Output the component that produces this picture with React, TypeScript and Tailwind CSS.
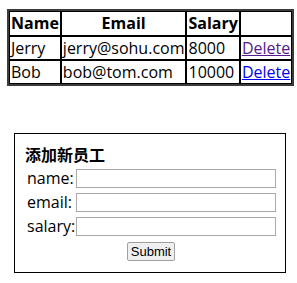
import { useState } from "react";

type Employee = { name: string; email: string; salary: string; visited?: boolean };

const initial: Employee[] = [
  { name: "Jerry", email: "jerry@sohu.com", salary: "8000", visited: true },
  { name: "Bob", email: "bob@tom.com", salary: "10000" },
];

const cell = "border border-black px-px py-0 text-left font-normal";

export default function App() {
  const [rows] = useState(initial);

  return (
    <div className="min-h-[283px] bg-white pt-[9px] pl-[7px] text-[16px] leading-[22px] text-black [font-family:'Open_Sans','Noto_Sans_CJK_SC',sans-serif]">
      <table className="border-separate border-spacing-0 border-2 border-[#3c3c3c]">
        <thead>
          <tr>
            <th className={`${cell} !font-bold leading-[23px]`}>Name</th>
            <th className={`${cell} !font-bold !text-center leading-[23px]`}>Email</th>
            <th className={`${cell} !font-bold leading-[23px]`}>Salary</th>
            <th className={cell}></th>
          </tr>
        </thead>
        <tbody>
          {rows.map((r) => (
            <tr key={r.name}>
              <td className={cell}>{r.name}</td>
              <td className={cell}>{r.email}</td>
              <td className={cell}>{r.salary}</td>
              <td className={cell}>
                <a href="#" className={`underline ${r.visited ? "text-[#551a8b]" : "text-[#0000ee]"}`}>
                  Delete
                </a>
              </td>
            </tr>
          ))}
        </tbody>
      </table>

      <div className="ml-[7px] mt-[47px] w-[272px] border border-black pl-[10px] pr-2 pt-[9px] pb-[11px]">
        <div className="font-bold leading-[24px]">添加新员工</div>
        <div className="grid grid-cols-[auto_1fr] items-center gap-x-px gap-y-[2px] pl-[2px]">
          <label>name:</label>
          <input className="h-[19px] border border-[#a9a9a9] w-[200px]" />
          <label>email:</label>
          <input className="h-[19px] border border-[#a9a9a9] w-[200px]" />
          <label>salary:</label>
          <input className="h-[19px] border border-[#a9a9a9] w-[200px]" />
        </div>
        <div className="mt-[5px] flex justify-center">
          <button className="h-[19px] rounded-[2px] border border-[#a0a0a0] bg-[#efefef] px-[3px] text-[13px] leading-[15px] [font-family:'Liberation_Sans',sans-serif]">
            Submit
          </button>
        </div>
      </div>
    </div>
  );
}
